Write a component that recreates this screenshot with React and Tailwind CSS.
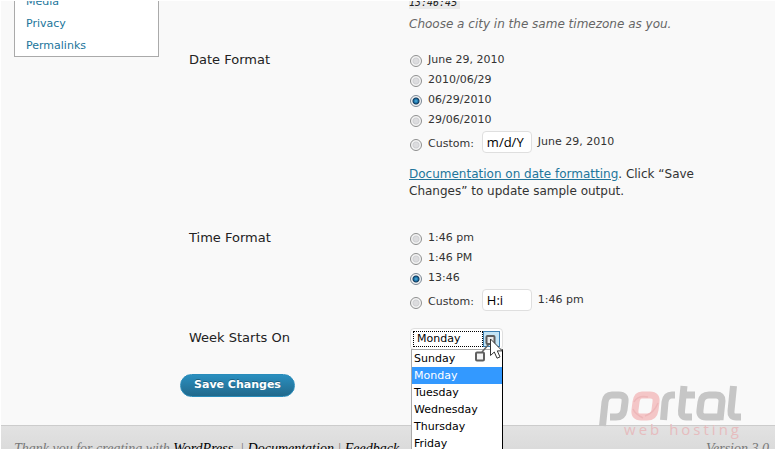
import React, { useState } from "react";

const DAYS = ["Sunday", "Monday", "Tuesday", "Wednesday", "Thursday", "Friday", "Saturday"];

const DATE_FORMATS = ["June 29, 2010", "2010/06/29", "06/29/2010", "29/06/2010"];
const TIME_FORMATS = ["1:46 pm", "1:46 PM", "13:46"];

const RADIO =
  "mt-0.5 size-3 shrink-0 appearance-none rounded-full border border-[#8e8f8f] bg-[radial-gradient(circle,#dcdcde_0_2px,#cfd0d3_3px,#f4f4f4_4px)] checked:border-[#7b8794] checked:bg-[radial-gradient(circle_at_50%_50%,#4fb4e0_0,#1b6fa5_2px,#123a5c_3px,#f4f4f4_4px)]";

const FormatOptions = ({ name, formats, initial, custom, sample }) => {
  const [selected, setSelected] = useState(initial);

  return (
    <fieldset aria-label={name} className="ml-px text-[11px] leading-5 text-[#333333]">
      {formats.map((format) => (
        <label key={format} className="flex h-5 items-center gap-1.5">
          <input
            type="radio"
            name={name}
            className={RADIO}
            checked={selected === format}
            onChange={() => setSelected(format)}
          />
          {format}
        </label>
      ))}
      <div className="flex h-7 items-center gap-2">
        <label className="flex items-center gap-1.5">
          <input
            type="radio"
            name={name}
            className={RADIO}
            checked={selected === "custom"}
            onChange={() => setSelected("custom")}
          />
          Custom:
        </label>
        <div className="flex items-center gap-1.5 pb-1">
          <input
            type="text"
            aria-label={`${name} custom`}
            defaultValue={custom}
            className="h-[22px] w-[50px] rounded border border-[#dfdfdf] bg-white px-1 font-['Open_Sans',sans-serif] text-[13px] text-black"
          />
          <span>{sample}</span>
        </div>
      </div>
    </fieldset>
  );
};

// Mouse pointer with the small scroll marker next to it
const Pointer = () => (
  <svg className="pointer-events-none absolute top-0.5 left-[62px] z-10" width="32" height="36" viewBox="0 0 32 36" aria-hidden="true">
    <path d="M16 13 9 21" stroke="#666" strokeWidth="1.5" />
    <rect x="13.500" y="5" width="8" height="8" rx="1" fill="#e8e8e8" stroke="#5f5f5f" strokeWidth="2" />
    <rect x="3" y="21.500" width="8" height="8" rx="1" fill="#f4f4f4" stroke="#5f5f5f" strokeWidth="2" />
    <path d="M17.500 8v16.500l3.800-3.500 2.700 6.200 3-1.300-2.700-6h5z" fill="#fff" stroke="#333" strokeWidth="1" />
  </svg>
);

const WeekSelect = () => {
  const [day, setDay] = useState("Monday");

  return (
    <div className="relative ml-px w-[93px] rounded border border-[#dfdfdf] bg-white p-0.5 text-[11px] text-black">
      <div className="flex h-4">
        <select
          id="start_of_week"
          value={day}
          onChange={(e) => setDay(e.target.value)}
          className="w-[70px] appearance-none border border-dotted border-black bg-white pl-[3px] leading-[14px] outline-none"
        >
          {DAYS.map((d) => (
            <option key={d}>{d}</option>
          ))}
        </select>
        <span className="flex-1 border border-[#3c7fb1] bg-[#c4e5f6]" />
      </div>
      <ul role="listbox" aria-label="Week Starts On" className="absolute top-full left-0 w-[92px] border border-black border-t-[#aaaaaa] border-l-[#aaaaaa] bg-white">
        {DAYS.map((d) => (
          <li
            key={d}
            role="option"
            aria-selected={d === day}
            onClick={() => setDay(d)}
            className={`h-[17px] pl-0.5 leading-[17px] ${d === day ? "bg-[#3399ff] text-white" : ""}`}
          >
            {d}
          </li>
        ))}
      </ul>
      <Pointer />
    </div>
  );
};

const Watermark = () => (
  <div className="pointer-events-none absolute right-[34px] bottom-[15px] w-[144px]">
    <svg width="144" height="42" viewBox="0 0 144 42" fill="none" strokeWidth="7" strokeLinejoin="round" aria-hidden="true">
      <g stroke="#c6c6c6">
        <path d="M4.500 41 7 17Q8 10 14 10H21Q28 10 27 17L26 25Q25 32 18 32H12" />
        <path d="M65.500 35 67 17Q68 10 74 10H77" />
        <path d="M86 1 83.500 26Q83 32 88 32H94M86 10H97" />
        <path d="M122 35 124 16Q124 10 118 10H111Q104 10 103 17L102 25Q101 32 108 32H122" />
        <path d="M135.500 1 133 26Q132.500 32 138 32H143" />
      </g>
      <path d="M44 10H52Q59 10 58 17L57 25Q56 32 49 32H43Q36 32 37 25L38 17Q39 10 44 10Z" stroke="#f4c6c7" />
      <path d="M36 17Q40 10 50 12M35 24Q37 29 45 33M47 31Q56 28 60 18" stroke="#edb7b9" strokeWidth="1.500" />
    </svg>
    <p className="-mt-1 text-right font-['Open_Sans',sans-serif] text-[15px] leading-3 tracking-[3px] whitespace-nowrap text-[#e6bcbe]">web hosting</p>
  </div>
);

const App = () => {
  return (
    <div className="relative h-screen overflow-hidden bg-white p-px font-['DejaVu_Sans',Verdana,sans-serif] text-[13px] text-[#222222]">
      <div className="flex h-full flex-col overflow-hidden bg-[#f9f9f9]">
        <div className="flex px-[13px]">
          {/* Settings submenu */}
          <nav className="-mt-3 h-[68px] w-[145px] shrink-0 border border-[#aaaaaa] bg-white pt-px pl-[11px] text-[11px] leading-[22px] text-[#21759b]">
            <a href="#media" className="block">Media</a>
            <a href="#privacy" className="block">Privacy</a>
            <a href="#permalinks" className="block">Permalinks</a>
          </nav>

          <form className="ml-[21px] min-w-0 flex-1" onSubmit={(e) => e.preventDefault()}>
            <div className="grid grid-cols-[220px_1fr] pl-[9px]">
              <div className="col-start-2 h-[49px]">
                <code className="-mt-1 block w-[51px] bg-[#eaeaea] font-['DejaVu_Sans_Mono',monospace] text-[10px] leading-3 italic">13:46:45</code>
                <p className="mt-1.5 text-[12px] leading-[18px] text-[#666666] italic">Choose a city in the same timezone as you.</p>
              </div>

              <div className="text-[13px] leading-5">Date Format</div>
              <div className="h-[178px]">
                <FormatOptions name="Date Format" formats={DATE_FORMATS} initial="06/29/2010" custom="m/d/Y" sample="June 29, 2010" />
                <p className="mt-2 max-w-[310px] text-[12px] leading-[17px] text-[#333333]">
                  <a href="#date-formatting" className="text-[#21759b] underline">Documentation on date formatting</a>. Click “Save Changes” to update sample output.
                </p>
              </div>

              <div className="text-[13px] leading-5">Time Format</div>
              <div className="h-[100px]">
                <FormatOptions name="Time Format" formats={TIME_FORMATS} initial="13:46" custom="H:i" sample="1:46 pm" />
              </div>

              <label htmlFor="start_of_week" className="text-[13px] leading-5">Week Starts On</label>
              <WeekSelect />
            </div>

            <button type="submit" className="mt-6 h-[23px] w-[115px] rounded-full border border-[#298cba] bg-linear-to-b from-[#2a8fbf] to-[#21698c] text-[11px] font-bold text-white [text-shadow:0_-1px_0_rgba(0,0,0,0.3)]">
              Save Changes
            </button>
          </form>
        </div>

        <footer className="mt-7 flex flex-1 shrink-0 justify-between border-t border-[#cccccc] bg-linear-to-b from-[#e2e2e2] to-[#d8d8d8] pt-3.5 pr-1.5 pl-[13px] font-['Liberation_Serif',Georgia,serif] text-[14px] leading-[18px] text-[#777777] italic">
          <p>
            Thank you for creating with <a href="#wordpress" className="text-black">WordPress</a>. | <a href="#docs" className="text-black">Documentation</a> | <a href="#feedback" className="text-black">Feedback</a>
          </p>
          <p>Version 3.0</p>
        </footer>
      </div>
      <Watermark />
    </div>
  );
};

export default App;
